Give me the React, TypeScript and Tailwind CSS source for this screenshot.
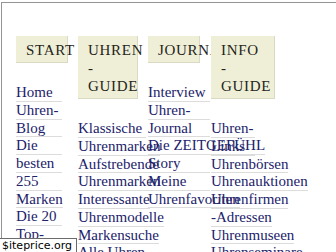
const MENUS = [
  {
    label: 'START',
    li: 'w-[62px]',
    tab: 'w-[52px]',
    sub: 'w-[46px]',
    lines: ['Home', 'Uhren-', 'Blog', 'Die', 'besten', '255', 'Marken', 'Die 20', 'Top-', 'Uhren'],
  },
  {
    label: 'UHREN - GUIDE',
    li: 'w-[70px]',
    tab: 'w-[60px]',
    sub: 'w-[68px]',
    lines: ['Klassische', 'Uhrenmarken', 'Aufstrebende', 'Uhrenmarken', 'Interessante', 'Uhrenmodelle', 'Markensuche', 'Alle Uhren'],
  },
  {
    label: 'JOURNAL',
    li: 'w-[63px]',
    tab: 'w-[52px]',
    sub: 'w-[62px]',
    lines: ['Interview', 'Uhren-', 'Journal', 'Die ZEITGEFÜHL', 'Story', 'Meine', 'Uhrenfavoriten'],
  },
  {
    label: 'INFO - GUIDE',
    li: 'w-[100px]',
    tab: 'w-[64px]',
    sub: 'w-[44px]',
    lines: ['Uhren-', 'Links', 'Uhrenbörsen', 'Uhrenauktionen', 'Uhrenfirmen', '-Adressen', 'Uhrenmuseen', 'Uhrenseminare'],
  },
];

export default function App() {
  return (
    <div className="relative h-[252px] w-[336px] overflow-hidden bg-white font-['Liberation_Serif',serif]">
      {/* Rahmen der Seite — nur links und oben sichtbar */}
      <div className="ml-[1px] mt-[2px] h-full border-l border-t border-[#949494] pl-[14px] pt-[33px]">
        <ul className="flex items-start">
          {MENUS.map((m) => (
            <li key={m.label} className={`shrink-0 ${m.li}`}>
              {/* relative, damit die spätere Box den überstehenden Text davor überdeckt */}
              <div
                className={`relative border-b border-r border-[#d9d9c4] bg-[#efefd7] pb-[3px] pl-[10px] pr-[12px] pt-[5px] text-[15px] leading-[18px] tracking-[0.7px] text-[#24241a] ${m.tab}`}
              >
                {m.label}
              </div>
              <ul className={`mt-[21px] ${m.sub}`}>
                {m.lines.map((t, i) => (
                  <li
                    key={i}
                    className="w-max min-w-full whitespace-nowrap border-b border-[#dcdcdc] text-[15px] leading-[16.75px] text-[#22226a]"
                  >
                    {t}
                  </li>
                ))}
              </ul>
            </li>
          ))}
        </ul>
      </div>

      {/* Wasserzeichen unten links */}
      <div className="absolute bottom-0 left-0 h-[14px] w-[77px] border-r border-t border-[#6b6b6b] bg-white pl-[2px] font-['DejaVu_Sans',sans-serif] text-[11px] leading-[13px] text-black">
        $iteprice.org
      </div>
    </div>
  );
}
